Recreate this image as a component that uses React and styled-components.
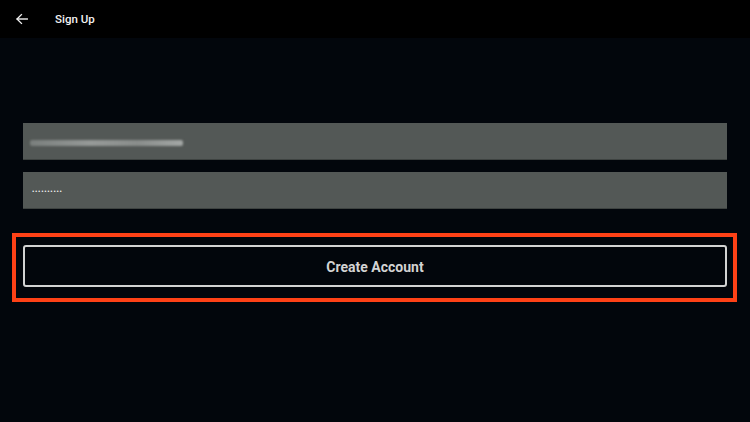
import styled, { createGlobalStyle } from 'styled-components';

const GlobalStyle = createGlobalStyle`
  html, body {
    margin: 0;
    padding: 0;
    background: #02060c;
    font-family: Roboto, "Liberation Sans", sans-serif;
  }
`;

const Page = styled.div`
  width: 750px;
  height: 422px;
  background: #02060c;
  display: flex;
  flex-direction: column;
`;

const Header = styled.header`
  height: 38px;
  background: #000;
  display: flex;
  align-items: center;
  padding-left: 14px;
  box-sizing: border-box;
`;

const BackButton = styled.div`
  width: 16px;
  height: 16px;
  display: flex;
  align-items: center;
  justify-content: center;
  margin-right: 25px;
`;

const Title = styled.h1`
  margin: 0;
  font-size: 11.5px;
  font-weight: 500;
  color: #f2f2f2;
`;

const Form = styled.div`
  display: flex;
  flex-direction: column;
  padding: 85px 23px 0 23px;
`;

const Field = styled.div`
  height: 37px;
  background: #535856;
  border-bottom: 1px solid #3e4341;
  box-sizing: border-box;
  display: flex;
  align-items: center;
  padding-left: ${(p) => p.$pad || 8}px;
  margin-bottom: ${(p) => p.$gap || 0}px;
`;

const Redacted = styled.span`
  display: block;
  width: 153px;
  height: 6px;
  margin-top: 3px;
  border-radius: 2px;
  background: linear-gradient(90deg, #7a7f7d 0%, #969a98 40%, #898d8b 70%, #a3a7a5 100%);
  filter: blur(0.9px);
`;

const Dots = styled.span`
  font-size: 7px;
  letter-spacing: 0.7px;
  color: #f4f4f4;
  line-height: 1;
  margin-top: 4px;
`;

const Highlight = styled.div`
  margin: 24px -10px 0 -11px;
  border: 4px solid #fe4116;
  padding: 8px 6px 11px 7px;
`;

const CreateButton = styled.button`
  width: 100%;
  height: 42px;
  background: #02060c;
  border: 2px solid #d2d3d3;
  border-radius: 3px;
  color: #d3d3d3;
  font-family: Roboto, "Liberation Sans", sans-serif;
  font-size: 14px;
  font-weight: 700;
  display: flex;
  align-items: center;
  justify-content: center;
  padding: 1px 0 0 0;
`;

const App = () => {
  return (
    <>
      <GlobalStyle />
      <Page>
        <Header>
          <BackButton>
            <svg width="14" height="14" viewBox="0 0 24 24" fill="none" stroke="#f2f2f2" strokeWidth="2.4" strokeLinecap="square">
              <path d="M21 12H4" />
              <path d="M11 4.5L3.5 12L11 19.5" />
            </svg>
          </BackButton>
          <Title>Sign Up</Title>
        </Header>
        <Form>
          <Field $gap={12} $pad={7}>
            <Redacted />
          </Field>
          <Field $pad={9}>
            <Dots>••••••••••</Dots>
          </Field>
          <Highlight>
            <CreateButton>Create Account</CreateButton>
          </Highlight>
        </Form>
      </Page>
    </>
  );
};

export default App;
